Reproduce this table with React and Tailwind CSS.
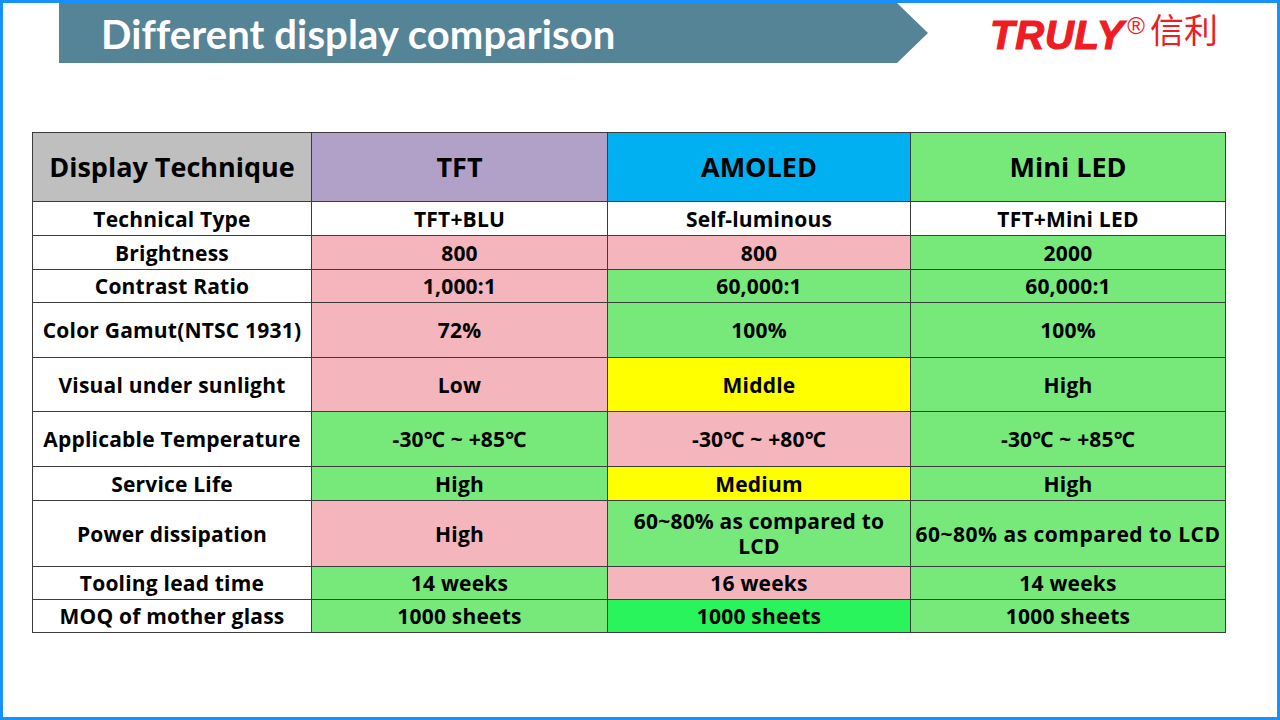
import React from "react";

const G = "bg-[#77e97a]";
const P = "bg-[#f4b5bd]";
const Y = "bg-[#ffff00]";
const W = "bg-white";
const B = "bg-[#29f45c]";

const LCD2 = (
  <span className="block leading-[25px]">
    60~80% as compared to
    <br />
    LCD
  </span>
);

const LCD1 = <span className="tracking-[0.5px]">60~80% as compared to LCD</span>;

const rows = [
  { h: "h-[33px]", label: "Technical Type", cells: [["TFT+BLU", W], ["Self-luminous", W], ["TFT+Mini LED", W]] },
  { h: "h-[33px]", label: "Brightness", cells: [["800", P], ["800", P], ["2000", G]] },
  { h: "h-[32px]", label: "Contrast Ratio", cells: [["1,000:1", P], ["60,000:1", G], ["60,000:1", G]] },
  { h: "h-[54px]", label: "Color Gamut(NTSC 1931)", cells: [["72%", P], ["100%", G], ["100%", G]] },
  { h: "h-[53px]", label: "Visual under sunlight", cells: [["Low", P], ["Middle", Y], ["High", G]] },
  { h: "h-[54px]", label: "Applicable Temperature", cells: [["-30℃ ~ +85℃", G], ["-30℃ ~ +80℃", P], ["-30℃ ~ +85℃", G]] },
  { h: "h-[33px]", label: "Service Life", cells: [["High", G], ["Medium", Y], ["High", G]] },
  { h: "h-[65px]", label: "Power dissipation", cells: [["High", P], [LCD2, G], [LCD1, G]] },
  { h: "h-[32px]", label: "Tooling lead time", cells: [["14 weeks", G], ["16 weeks", P], ["14 weeks", G]] },
  { h: "h-[32px]", label: "MOQ of mother glass", cells: [["1000 sheets", G], ["1000 sheets", B], ["1000 sheets", G]] },
];

export default function App() {
  const font = { fontFamily: '"Open Sans", "Noto Sans", sans-serif' };
  return (
    <div className="w-[1280px] h-[720px] box-border border-[3px] border-[#1890ff] bg-white overflow-hidden">
      <div className="flex items-center h-[60px]">
        <div className="ml-[56px] w-[869px] h-[60px] bg-[#568497] flex items-center [clip-path:polygon(0_0,calc(100%-31px)_0,100%_50%,calc(100%-31px)_100%,0_100%)]">
          <span
            className="ml-[42px] text-white text-[40px] font-bold leading-none mt-[1px] tracking-[0.1px]"
            style={{ fontFamily: 'Lato, "Open Sans", sans-serif' }}
          >
            Different display comparison
          </span>
        </div>
        <div className="ml-[62px] flex items-start mt-[4px]">
          <span
            className="text-[#ee1c25] italic font-bold text-[40px] leading-none tracking-[0.8px] [-webkit-text-stroke:1.2px_#ee1c25]"
            style={{ fontFamily: '"Liberation Sans", Arial, sans-serif' }}
          >
            TRULY
          </span>
          <span
            className="text-[#ee1c25] text-[24px] leading-none ml-[3px] -mt-[1px]"
            style={{ fontFamily: '"Liberation Sans", sans-serif' }}
          >
            ®
          </span>
          <span
            className="text-[#ee1c25] text-[34px] leading-none ml-[5px] -mt-[3px]"
            style={{ fontFamily: '"Noto Sans CJK SC", sans-serif' }}
          >
            信利
          </span>
        </div>
      </div>

      <div className="ml-[29px] mt-[69px] w-[1194px]" style={font}>
        <div className="grid grid-cols-[278px_295px_302px_314px] gap-px bg-[#3c3c3c] p-px text-black font-bold">
          <div className="h-[68px] bg-[#bfbfbf] flex items-center justify-center text-[27px]">Display Technique</div>
          <div className="h-[68px] bg-[#b1a0c7] flex items-center justify-center text-[27px]">TFT</div>
          <div className="h-[68px] bg-[#00b0f0] flex items-center justify-center text-[27px]">AMOLED</div>
          <div className="h-[68px] bg-[#77e97a] flex items-center justify-center text-[27px]">Mini LED</div>
          {rows.map((r, i) => (
            <React.Fragment key={i}>
              <div className={`${r.h} bg-white flex items-center justify-center text-[21px] leading-[24px] tracking-[0.2px] text-center whitespace-nowrap`}>
                {r.label}
              </div>
              {r.cells.map(([t, c], j) => (
                <div
                  key={j}
                  className={`${r.h} ${c} flex items-center justify-center text-[21px] leading-[24px] tracking-[0.2px] text-center whitespace-nowrap`}
                >
                  {t}
                </div>
              ))}
            </React.Fragment>
          ))}
        </div>
      </div>
    </div>
  );
}
